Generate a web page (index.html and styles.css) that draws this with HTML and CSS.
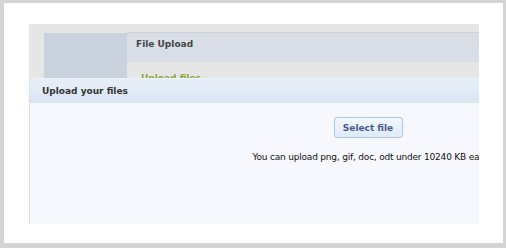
FILE: index.html
```html
<!DOCTYPE html>
<html>
<head>
  <meta charset="UTF-8">
  <title>File Upload</title>
  <link rel="stylesheet" href="styles.css">
</head>
<body>
  <div class="sheet">
    <div class="frame">
      <div class="page">
        <div class="sidebar"></div>
        <div class="main">
          <div class="title-bar">File Upload</div>
          <div class="content">
            <h2 class="section">Upload files</h2>
          </div>
        </div>
      </div>

      <div class="dialog">
        <div class="dialog-head">Upload your files</div>
        <div class="dialog-body">
          <button type="button" class="select">Select file</button>
          <p class="hint">You can upload png, gif, doc, odt under 10240 KB each</p>
        </div>
      </div>
    </div>
  </div>
</body>
</html>
```

FILE: styles.css
```css
html, body { margin: 0; height: 100%; }
body { background: #d4d4d4; padding: 3px 3px 5px 4px; box-sizing: border-box; font-family: "DejaVu Sans", sans-serif; font-size: 9px; color: #222; }
.sheet { background: #fff; height: 240px; padding: 21px 0 0 25px; box-sizing: border-box; }
.frame { position: relative; overflow: hidden; width: 450px; height: 200px; background: #e6e6e6; padding: 8px 0 0 15px; box-sizing: border-box; }
.page { display: flex; height: 100%; }
.sidebar { width: 83px; background: #c9d2dd; margin-top: 1px; }
.main { flex: 1; }
.title-bar { height: 30px; line-height: 12px; padding: 5px 0 0 9px; box-sizing: border-box; border-top: 1px solid #cdd1d7; background: #d9dee6; font-weight: bold; color: #444; }
.content { padding: 10px 0 0 14px; }
.section { margin: 0; font-size: 9px; line-height: 12px; color: #8aa83c; }
.dialog { position: absolute; left: 0; top: 54px; bottom: 0; width: 676px; border-left: 1px solid #d8e0ee; border-top-left-radius: 4px; background: #f7f8fd; }
.dialog-head { height: 24px; line-height: 25px; padding-left: 12px; font-weight: bold; color: #333; border-top: 1px solid #eef3fa; border-top-left-radius: 4px; background: linear-gradient(#e6eef8, #e2ebf6 50%, #d8e4f3); }
.dialog-body { display: flex; flex-direction: column; align-items: center; padding-top: 14px; }
.select { width: 69px; height: 21px; padding: 0; border: 1px solid #a9cbeb; border-radius: 3px; background: linear-gradient(#f2f8fe, #dfeaf8); font: bold 9px "DejaVu Sans", sans-serif; color: #4c5b88; }
.hint { margin: 13px 0 0; padding-left: 6px; line-height: 12px; white-space: nowrap; letter-spacing: -0.2px; color: #111; }
```
